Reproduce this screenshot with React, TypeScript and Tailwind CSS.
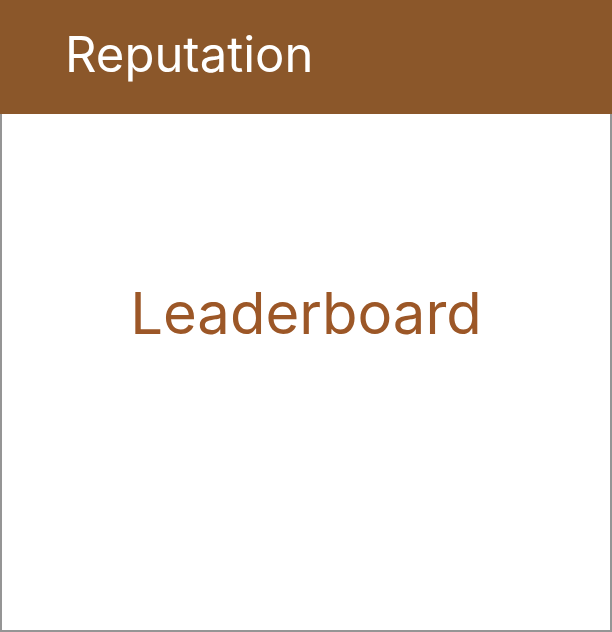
export default function App() {
  return (
    <div className="w-[612px] h-[632px] flex flex-col bg-white" style={{ fontFamily: 'Inter, "Liberation Sans", Arial, sans-serif' }}>
      <div className="h-[114px] bg-[#8b572a] pl-[65px] pt-[30px]">
        <div className="text-[49px] leading-none text-white">Reputation</div>
      </div>
      <div className="flex-1 border-x-2 border-b-2 border-[#959595] flex flex-col items-center pt-[170px]">
        <div className="text-[58px] leading-none text-[#9c5727]">Leaderboard</div>
      </div>
    </div>
  );
}
